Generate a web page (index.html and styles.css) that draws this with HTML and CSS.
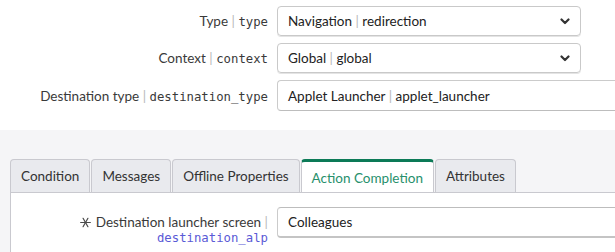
FILE: index.html
```html
<!DOCTYPE html>
<html>
<head>
<meta charset="utf-8">
<link rel="stylesheet" href="styles.css">
</head>
<body>
<div class="top">
  <div class="prev"></div>
  <div class="row">
    <div class="label">Type <span class="sep">|</span> <code>type</code></div>
    <div class="select"><span>Navigation <span class="sep">|</span> redirection</span>
      <svg class="chev" width="10" height="7" viewBox="0 0 10 7"><path d="M1.5 1.5 L5 5 L8.5 1.5" fill="none" stroke="#333" stroke-width="2.2" stroke-linecap="round" stroke-linejoin="round"/></svg>
    </div>
  </div>
  <div class="row">
    <div class="label">Context <span class="sep">|</span> <code>context</code></div>
    <div class="select"><span>Global <span class="sep">|</span> global</span>
      <svg class="chev" width="10" height="7" viewBox="0 0 10 7"><path d="M1.5 1.5 L5 5 L8.5 1.5" fill="none" stroke="#333" stroke-width="2.2" stroke-linecap="round" stroke-linejoin="round"/></svg>
    </div>
  </div>
  <div class="row">
    <div class="label">Destination type <span class="sep">|</span> <code>destination_type</code></div>
    <div class="input wide"><span>Applet Launcher <span class="sep">|</span> applet_launcher</span></div>
  </div>
</div>
<div class="bottom">
  <div class="tabs">
    <div class="tab">Condition</div>
    <div class="tab">Messages</div>
    <div class="tab">Offline Properties</div>
    <div class="tab active">Action Completion</div>
    <div class="tab">Attributes</div>
  </div>
  <div class="panel">
    <div class="prow">
      <div class="plabel">
        <div><svg class="star" width="11" height="11" viewBox="0 0 10 10"><g stroke="#4a4a4a" stroke-width="1.1" stroke-linecap="round"><line x1="0.6" y1="5" x2="9.4" y2="5"/><line x1="2.8" y1="1.2" x2="7.2" y2="8.8"/><line x1="7.2" y1="1.2" x2="2.8" y2="8.8"/></g></svg> Destination launcher screen <span class="sep">|</span></div>
        <code class="key">destination_alp</code>
      </div>
      <div class="input pinput"><span>Colleagues</span></div>
    </div>
  </div>
</div>
</body>
</html>
```
FILE: styles.css
```css
html, body {
  margin: 0;
  padding: 0;
  background: #fff;
}
body {
  font-family: Lato, "Noto Sans", sans-serif;
  font-size: 13.5px;
  color: #333;
  overflow: hidden;
  width: 615px;
  height: 252px;
}
code {
  font-family: "DejaVu Sans Mono", monospace;
  font-size: 12.3px;
  color: #3a3a3a;
}
.sep {
  color: #b8b8b8;
}
.top {
  height: 132px;
  display: flex;
  flex-direction: column;
  gap: 7px;
  margin-top: -2px;
}
.prev {
  margin-left: 277px;
  height: 0;
  border-bottom: 1px solid #cfcfcf;
}
.row {
  display: flex;
  align-items: center;
  gap: 9px;
}
.label {
  width: 268px;
  text-align: right;
  color: #3a3a3a;
  white-space: nowrap;
}
.select {
  box-sizing: border-box;
  width: 304px;
  height: 30px;
  border: 1px solid #c9c9c9;
  border-radius: 4px;
  display: flex;
  align-items: center;
  justify-content: space-between;
  padding: 0 10px 0 10px;
  color: #222;
  box-shadow: 0 1px 0 #e4e4e4;
}
.input {
  box-sizing: border-box;
  height: 31px;
  border: 1px solid #cbcbcb;
  border-bottom-color: #bdbdbd;
  border-right: none;
  border-radius: 4px 0 0 4px;
  display: flex;
  align-items: center;
  padding: 0 10px;
  color: #222;
  flex: 1;
}
.bottom {
  background: #f5f5f7;
  padding-top: 29px;
  padding-left: 10px;
  height: 93px;
}
.tabs {
  display: flex;
  gap: 1px;
  height: 33px;
  align-items: stretch;
}
.tab {
  box-sizing: border-box;
  padding: 0 10px;
  border: 1px solid #c9c9cf;
  border-bottom: none;
  border-radius: 4px 4px 0 0;
  background: #e9eaee;
  display: flex;
  align-items: center;
  color: #333;
  white-space: nowrap;
}
.tab.active {
  background: #fff;
  border-top: 3px solid #0c7a57;
  color: #27906c;
  padding-top: 1px;
}
.panel {
  background: #fff;
  border-left: 1px solid #c9c9cf;
  border-top: 1px solid #c9c9cf;
  height: 60px;
  padding-top: 14px;
  box-sizing: border-box;
}
.prow {
  display: flex;
  align-items: flex-start;
  gap: 9px;
}
.plabel {
  width: 257px;
  text-align: right;
  line-height: 16px;
  padding-top: 7px;
  color: #3a3a3a;
  white-space: nowrap;
}
.star {
  vertical-align: -1px;
  margin-right: 1px;
}
.key {
  color: #5a5ad6;
  display: block;
}
.pinput {
  border-top-color: #bdbdbd;
  border-bottom: 2px solid #c4c4c4;
  height: 31px;
}
```
